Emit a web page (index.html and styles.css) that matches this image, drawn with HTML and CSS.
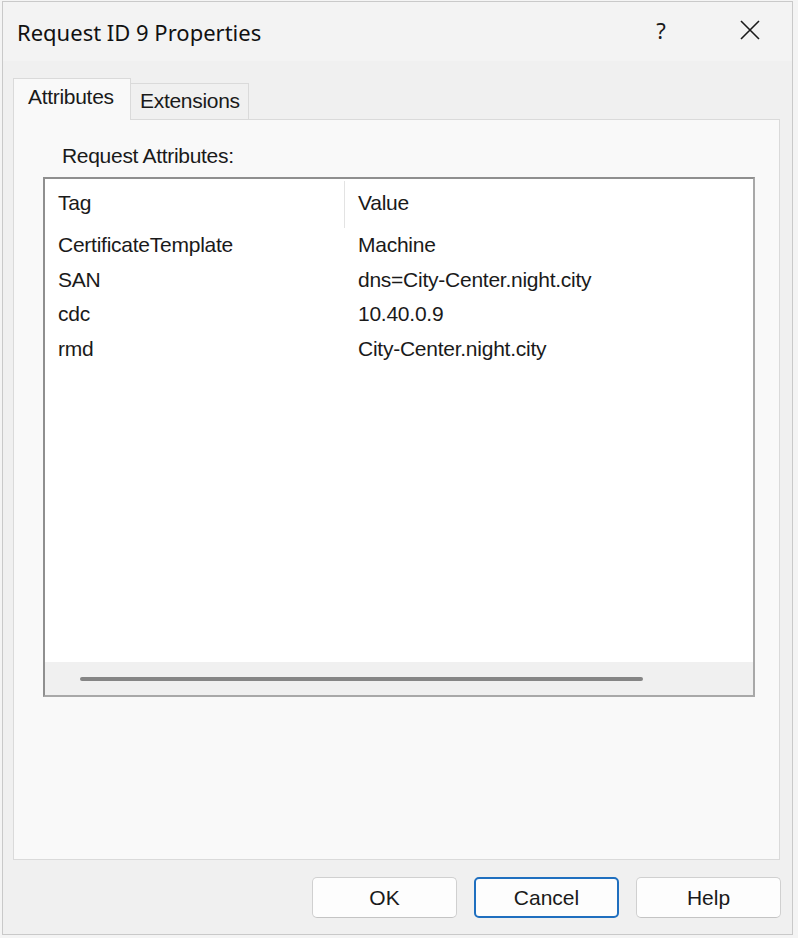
FILE: index.html
```html
<!DOCTYPE html>
<html>
<head>
<meta charset="utf-8">
<link rel="stylesheet" href="styles.css">
</head>
<body>
<div class="window">
  <div class="titlebar">
    <div class="title">Request ID 9 Properties</div>
    <div class="help-btn">?</div>
    <div class="close-btn">
      <svg width="22" height="22" viewBox="0 0 22 22"><path d="M2 2 L20 20 M20 2 L2 20" stroke="#1a1a1a" stroke-width="1.6" fill="none"/></svg>
    </div>
  </div>
  <div class="content">
    <div class="tabs">
      <div class="tab tab-active">Attributes</div>
      <div class="tab">Extensions</div>
    </div>
    <div class="panel">
      <div class="label">Request Attributes:</div>
      <div class="listbox">
        <div class="list-area">
          <div class="list-header">
            <div class="col col-tag">Tag</div>
            <div class="col col-value">Value</div>
          </div>
          <div class="row"><div class="col col-tag">CertificateTemplate</div><div class="col col-value">Machine</div></div>
          <div class="row"><div class="col col-tag">SAN</div><div class="col col-value">dns=City-Center.night.city</div></div>
          <div class="row"><div class="col col-tag">cdc</div><div class="col col-value">10.40.0.9</div></div>
          <div class="row"><div class="col col-tag">rmd</div><div class="col col-value">City-Center.night.city</div></div>
        </div>
        <div class="hscroll"><div class="thumb"></div></div>
      </div>
    </div>
  </div>
  <div class="buttons">
    <div class="btn">OK</div>
    <div class="btn btn-default">Cancel</div>
    <div class="btn">Help</div>
  </div>
</div>
</body>
</html>
```
FILE: styles.css
```css
html, body {
  margin: 0;
  padding: 0;
  background: #f4f4f4;
}
body {
  width: 798px;
  height: 938px;
  overflow: hidden;
  font-family: "Liberation Sans", Arial, sans-serif;
  color: #1a1a1a;
}
.window {
  box-sizing: border-box;
  width: 791px;
  height: 934px;
  margin: 1px 0 0 2px;
  border: 1px solid #c9c9c9;
  background: #f0f0f0;
  display: flex;
  flex-direction: column;
}
.titlebar {
  height: 59px;
  flex: none;
  background: #f3f3f3;
  display: flex;
  align-items: center;
}
.title {
  font-family: "Noto Sans", "Open Sans", sans-serif;
  font-size: 22px;
  padding-left: 14px;
  flex: 1;
  color: #111;
  margin-top: 0;
}
.help-btn {
  font-family: "Noto Sans", sans-serif;
  font-size: 22px;
  width: 20px;
  text-align: center;
  margin-right: 68px;
  margin-top: -3px;
  color: #1a1a1a;
}
.close-btn {
  width: 22px;
  height: 22px;
  margin-right: 31px;
  margin-top: -4px;
}
.content {
  padding: 0 12px 0 10px;
  flex: none;
}
.tabs {
  display: flex;
  align-items: flex-end;
  margin-top: 17px;
  height: 41px;
}
.tab {
  box-sizing: border-box;
  height: 36px;
  width: 118px;
  border: 1px solid #dadada;
  border-bottom: none;
  border-left: none;
  background: #f0f0f0;
  font-size: 21px;
  letter-spacing: -0.3px;
  padding-left: 9px;
  line-height: 32px;
  padding-top: 1px;
}
.tab-active {
  height: 42px;
  width: 118px;
  border-left: 1px solid #dadada;
  background: #f9f9f9;
  padding-left: 14px;
  line-height: 36px;
  padding-top: 0;
  margin-bottom: -1px;
  position: relative;
  z-index: 1;
}
.panel {
  box-sizing: border-box;
  height: 741px;
  border: 1px solid #dadada;
  background: #f9f9f9;
  padding: 25px 24px 0 29px;
  display: flex;
  flex-direction: column;
}
.label {
  font-size: 21px;
  letter-spacing: -0.3px;
  padding-left: 19px;
  line-height: 22px;
  height: 32px;
}
.listbox {
  box-sizing: border-box;
  height: 520px;
  border: 2px solid #8f8f8f;
  border-right-color: #a8a8a8;
  border-bottom-color: #a8a8a8;
  background: #ffffff;
  display: flex;
  flex-direction: column;
}
.list-area {
  flex: 1;
}
.list-header {
  display: flex;
  height: 49px;
  box-sizing: border-box;
  padding-top: 2px;
}
.list-header .col-tag {
  border-right: 1px solid #e3e3e3;
  height: 47px;
  line-height: 44px;
}
.list-header .col-value {
  line-height: 44px;
}
.row {
  display: flex;
  height: 34.5px;
  line-height: 34.5px;
}
.col {
  font-size: 21px;
  letter-spacing: -0.25px;
  white-space: nowrap;
  box-sizing: border-box;
}
.col-tag {
  width: 300px;
  padding-left: 13px;
  flex: none;
}
.col-value {
  padding-left: 13px;
}
.hscroll {
  height: 33px;
  background: #f0f0f0;
  flex: none;
  display: flex;
  align-items: center;
}
.thumb {
  margin-left: 35px;
  width: 563px;
  height: 4px;
  border-radius: 2px;
  background: #858585;
  margin-top: 1px;
}
.buttons {
  display: flex;
  justify-content: flex-end;
  gap: 17px;
  padding-right: 11px;
  margin-top: 17px;
}
.btn {
  box-sizing: border-box;
  width: 145px;
  height: 41px;
  border: 1px solid #d0d0d0;
  border-bottom-color: #c4c4c4;
  border-radius: 5px;
  background: #fdfdfd;
  font-size: 21px;
  text-align: center;
  line-height: 39px;
  color: #1a1a1a;
}
.btn-default {
  border: 2px solid #1f6fbf;
  line-height: 37px;
}
```
